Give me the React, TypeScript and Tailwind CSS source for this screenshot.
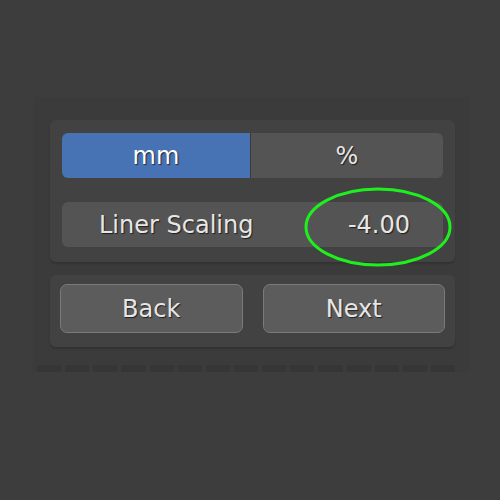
const font = "font-['DejaVu_Sans',sans-serif]";
const shadow = '[text-shadow:1px_1px_1px_rgba(0,0,0,0.65)]';

export default function App() {
  const dashes = Array.from({ length: 15 });

  return (
    <div className={`relative h-[500px] w-[500px] bg-[#3d3d3d] pl-[33px] pt-[97px] ${font}`}>
      <div className="w-[437px] bg-[#3b3b3b] pl-[17px] pr-[15px] pt-[23px]">
        {/* units + scaling */}
        <div className="flex flex-col gap-[24px] rounded-[6px] bg-[#424242] px-[12px] pb-[15px] pt-[13px] shadow-[0_2px_2px_rgba(0,0,0,0.15)]">
          <div className="flex h-[45px] overflow-hidden rounded-[6px]">
            <div className={`flex w-[188px] items-center justify-center bg-[#4772b3] text-[24px] text-white ${shadow}`}>mm</div>
            <div className="w-px bg-[#3a3a3a]" />
            <div className={`flex flex-1 items-center justify-center bg-[#545454] text-[24px] text-[#e6e6e6] ${shadow}`}>%</div>
          </div>
          <div className={`flex h-[45px] items-center justify-between rounded-[6px] bg-[#545454] pl-[37px] pr-[33px] text-[24px] text-[#e6e6e6] ${shadow}`}>
            <span>Liner Scaling</span>
            <span>-4.00</span>
          </div>
        </div>

        {/* navigation */}
        <div className="mt-[13px] flex gap-[20px] rounded-[6px] bg-[#424242] px-[10px] pb-[14px] pt-[9px] shadow-[0_2px_2px_rgba(0,0,0,0.15)]">
          {['Back', 'Next'].map(label => (
            <div
              key={label}
              className={`flex h-[49px] flex-1 items-center justify-center rounded-[7px] border border-[#7a7a7a] bg-[#5c5c5c] text-[24px] text-[#e6e6e6] ${shadow}`}
            >
              {label}
            </div>
          ))}
        </div>

        <div className="-ml-[13px] mt-[18px] flex h-[7px] gap-[4px]">
          {dashes.map((_, i) => (
            <div key={i} className="h-full w-[26px] bg-[#363636]" />
          ))}
        </div>
      </div>

      <svg className="absolute left-0 top-0" width="500" height="500">
        <ellipse cx="378" cy="227" rx="72" ry="38" fill="none" stroke="#1ef01e" strokeWidth="3" />
      </svg>
    </div>
  );
}
